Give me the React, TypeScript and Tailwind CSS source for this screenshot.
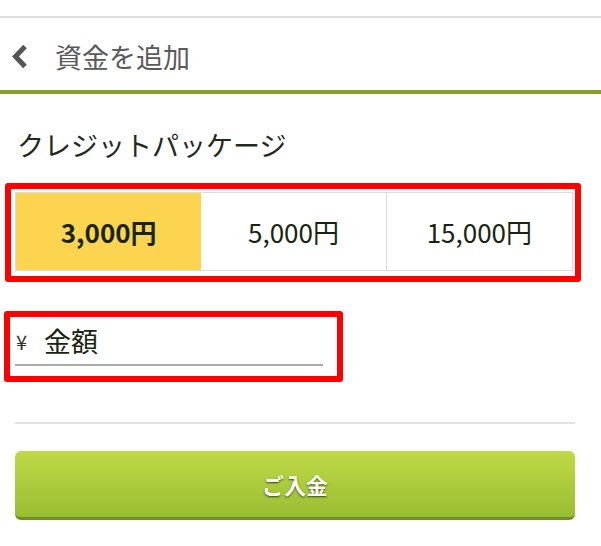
export default function App() {
  const font = { fontFamily: '"Noto Sans CJK JP", "Noto Sans", sans-serif' };
  return (
    <div className="w-[601px] h-[546px] bg-white overflow-hidden" style={font}>
      <div className="h-[16px]" />
      <div className="h-[2px] bg-[#dedede]" />
      {/* header */}
      <div className="h-[72px] flex items-center pt-[5px]">
        <svg width="40" height="24" viewBox="0 0 40 24" className="ml-[7px]">
          <polyline points="18,1.5 8.5,11.5 18,21.5" fill="none" stroke="#555" strokeWidth="5" strokeLinejoin="miter" />
        </svg>
        <span className="ml-[8px] text-[27px] leading-[27px] text-[#5a5a5a]">資金を追加</span>
      </div>
      <div className="h-[4px] bg-[#84a12c]" />

      <div className="mt-[36px] pl-[17px] text-[27px] leading-[30px] text-[#1d2a1c]">クレジットパッケージ</div>

      {/* packages */}
      <div className="mt-[23px] ml-[5px] w-[576px] h-[99px] border-[6px] border-[#ff0000] rounded-[3px] pl-[4px] pr-[2px] pt-[3px] pb-[5px]">
        <div className="grid grid-cols-3 h-full border border-[#dcdcdc] text-[26px] text-[#17250f]">
          <div className="flex items-center justify-center bg-[#fcd44f] font-bold">3,000円</div>
          <div className="flex items-center justify-center bg-white border-r border-[#dcdcdc]">5,000円</div>
          <div className="flex items-center justify-center bg-white">15,000円</div>
        </div>
      </div>

      {/* amount input */}
      <div className="mt-[29px] ml-[4px] w-[339px] h-[71px] border-[6px] border-[#ff0000] rounded-[3px] pl-[5px] pr-[14px]">
        <div className="h-[47px] flex items-center pt-[2px]">
          <span className="text-[20px] text-[#333] w-[29px] pl-[1px]">¥</span>
          <span className="text-[27px] text-[#17250f]">金額</span>
        </div>
        <div className="h-[2px] bg-[#a5ada4]" />
      </div>

      <div className="mt-[40px] mx-[15px] w-[560px] h-[2px] bg-[#e2e2e2]" />

      {/* submit */}
      <button
        className="mt-[27px] ml-[15px] w-[560px] h-[69px] rounded-[6px] bg-gradient-to-b from-[#c0da46] to-[#99bd33] border-b-[3px] border-[#6f8e26] shadow-[0_0_1px_#e8f3a8] flex items-center justify-center"
      >
        <span className="text-[22px] font-bold text-white [text-shadow:0_1px_2px_rgba(30,50,0,0.85)]">ご入金</span>
      </button>
    </div>
  );
}
